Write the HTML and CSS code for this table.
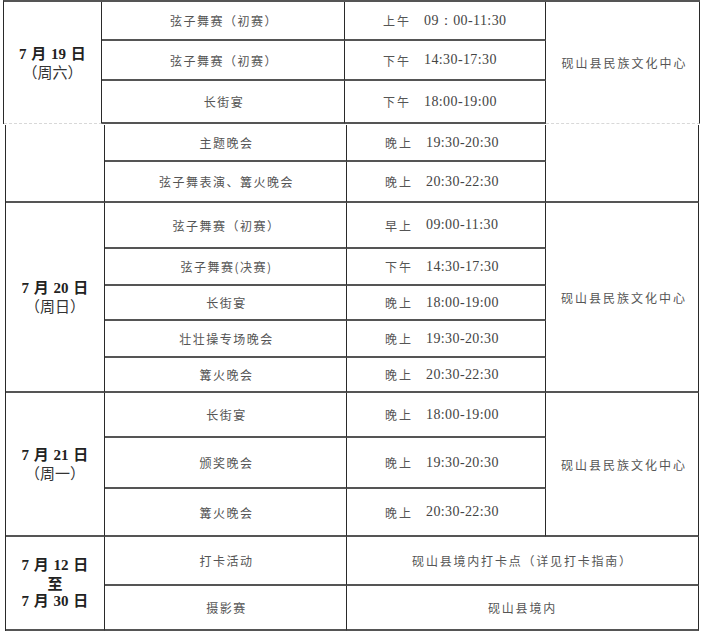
FILE: index.html
```html
<!DOCTYPE html>
<html lang="zh">
<head>
<meta charset="utf-8">
<title>活动安排</title>
<link rel="stylesheet" href="styles.css">
</head>
<body>
<div class="page">
  <div class="sheet sheet-a">
    <div class="cell date open">
      <span class="d">7 月 19 日</span>
      <span class="d">（周六）</span>
    </div>
    <div class="cell act">弦子舞赛（初赛）</div>
    <div class="cell time"><span class="ap">上午</span><span class="tm">09：00-11:30</span></div>
    <div class="cell loc open r3">砚山县民族文化中心</div>
    <div class="cell act">弦子舞赛（初赛）</div>
    <div class="cell time"><span class="ap">下午</span><span class="tm">14:30-17:30</span></div>
    <div class="cell act">长街宴</div>
    <div class="cell time"><span class="ap">下午</span><span class="tm">18:00-19:00</span></div>
  </div>

  <div class="sheet sheet-b">
    <div class="cell date r2"></div>
    <div class="cell act">主题晚会</div>
    <div class="cell time"><span class="ap">晚上</span><span class="tm">19:30-20:30</span></div>
    <div class="cell loc r2"></div>
    <div class="cell act">弦子舞表演、篝火晚会</div>
    <div class="cell time"><span class="ap">晚上</span><span class="tm">20:30-22:30</span></div>

    <div class="cell date r5">
      <span class="d">7 月 20 日</span>
      <span class="d">（周日）</span>
    </div>
    <div class="cell act">弦子舞赛（初赛）</div>
    <div class="cell time"><span class="ap">早上</span><span class="tm">09:00-11:30</span></div>
    <div class="cell loc r5">砚山县民族文化中心</div>
    <div class="cell act">弦子舞赛(决赛)</div>
    <div class="cell time"><span class="ap">下午</span><span class="tm">14:30-17:30</span></div>
    <div class="cell act">长街宴</div>
    <div class="cell time"><span class="ap">晚上</span><span class="tm">18:00-19:00</span></div>
    <div class="cell act">壮壮操专场晚会</div>
    <div class="cell time"><span class="ap">晚上</span><span class="tm">19:30-20:30</span></div>
    <div class="cell act">篝火晚会</div>
    <div class="cell time"><span class="ap">晚上</span><span class="tm">20:30-22:30</span></div>

    <div class="cell date r3">
      <span class="d">7 月 21 日</span>
      <span class="d">（周一）</span>
    </div>
    <div class="cell act">长街宴</div>
    <div class="cell time"><span class="ap">晚上</span><span class="tm">18:00-19:00</span></div>
    <div class="cell loc r3">砚山县民族文化中心</div>
    <div class="cell act">颁奖晚会</div>
    <div class="cell time"><span class="ap">晚上</span><span class="tm">19:30-20:30</span></div>
    <div class="cell act">篝火晚会</div>
    <div class="cell time"><span class="ap">晚上</span><span class="tm">20:30-22:30</span></div>

    <div class="cell date r2 range">
      <span class="d">7 月 12 日</span>
      <span class="d">至</span>
      <span class="d">7 月 30 日</span>
    </div>
    <div class="cell act">打卡活动</div>
    <div class="cell place">砚山县境内打卡点（详见打卡指南）</div>
    <div class="cell act">摄影赛</div>
    <div class="cell place">砚山县境内</div>
  </div>
</div>
</body>
</html>
```

FILE: styles.css
```css
html, body {
  margin: 0;
  padding: 0;
  background: #ffffff;
}

.page {
  width: 705px;
  height: 644px;
  display: flex;
  flex-direction: column;
}

.sheet {
  display: grid;
  border-left: 1px solid #2a2a2a;
  box-sizing: border-box;
}

.sheet-a {
  margin-left: 3px;
  width: 697px;
  grid-template-columns: 98px 243px 201px 154px;
  grid-template-rows: 39px 40px 43px;
  border-top: 2px solid #555;
}

.sheet-b {
  margin-left: 5px;
  width: 694px;
  margin-top: 1px;
  grid-template-columns: 99px 242px 199px 153px;
  grid-template-rows: 37px 41px 46px 37px 35px 37px 35px 45px 51px 48px 49px 45px;
}

.cell {
  box-sizing: border-box;
  border-right: 1px solid #2a2a2a;
  border-bottom: 2px solid #555;
  display: flex;
  align-items: center;
  justify-content: center;
  font-family: "Noto Sans CJK SC", "Noto Sans", sans-serif;
  font-size: 12px;
  color: #555;
  letter-spacing: 1.5px;
  min-width: 0;
}

.r2 { grid-row: span 2; }
.r3 { grid-row: span 3; }
.r5 { grid-row: span 5; }

.sheet-a .date { grid-row: span 3; }

.open {
  border-bottom: 1px dashed #d8d8d8;
}

.date {
  flex-direction: column;
  color: #222;
  letter-spacing: 0;
}

.d {
  font-family: "Liberation Serif", "Noto Sans CJK SC", serif;
  font-weight: bold;
  font-size: 15px;
  line-height: 18px;
  word-spacing: 1px;
}

.date .d:nth-child(2) {
  font-family: "Noto Sans CJK SC", sans-serif;
  font-weight: normal;
  font-size: 15px;
  color: #333;
}

.range .d:nth-child(2) {
  font-weight: bold;
  color: #222;
}

.range .d:nth-child(3) {
  font-family: "Liberation Serif", "Noto Sans CJK SC", serif;
  font-weight: bold;
}

.act {
  padding-left: 2px;
}

.time {
  justify-content: flex-start;
  padding-left: 38px;
}

.ap {
  letter-spacing: 2px;
  margin-right: 13px;
}

.tm {
  font-family: "Liberation Serif", serif;
  font-size: 14px;
  letter-spacing: 0.4px;
  color: #444;
}

.loc {
  padding-left: 4px;
  letter-spacing: 2px;
}

.place {
  grid-column: span 2;
  letter-spacing: 1.8px;
}
```
